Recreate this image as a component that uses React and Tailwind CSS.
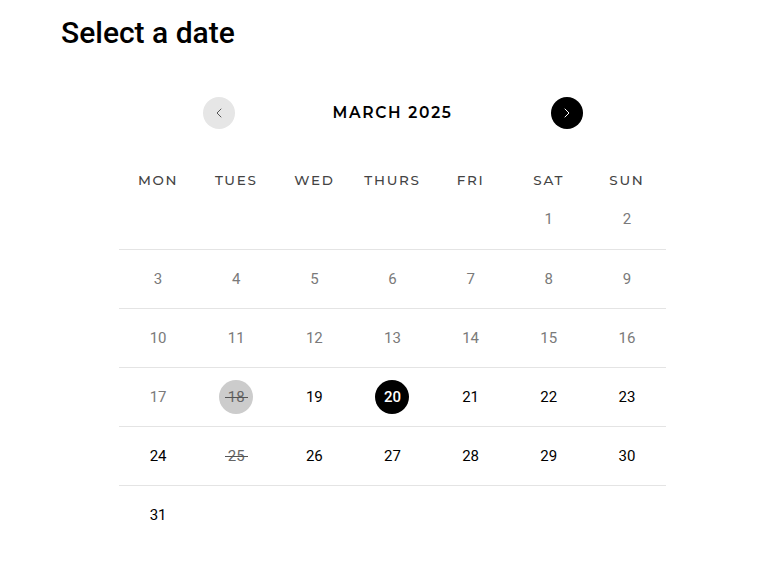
import React from "react";
import { ChevronLeft, ChevronRight } from "lucide-react";

const DAYS = ["MON", "TUES", "WED", "THURS", "FRI", "SAT", "SUN"];

// March 2025 starts on a Saturday
const WEEKS = [
  [null, null, null, null, null, 1, 2],
  [3, 4, 5, 6, 7, 8, 9],
  [10, 11, 12, 13, 14, 15, 16],
  [17, 18, 19, 20, 21, 22, 23],
  [24, 25, 26, 27, 28, 29, 30],
  [31, null, null, null, null, null, null],
];

const TODAY = 18;
const SELECTED = 20;
const BLOCKED = [18, 25];

export default function App() {
  return (
    <div className="min-h-screen bg-white font-['Roboto',sans-serif] text-black">
      {/* Header */}
      <h1 className="pl-[61px] pt-[15px] text-[30px] leading-[36px] font-medium">
        Select a date
      </h1>

      <div className="ml-[119px] w-[547px] mt-[46px]">
        {/* Month nav */}
        <div className="mx-auto w-[380px] flex items-center justify-between">
          <button className="w-8 h-8 rounded-full bg-[#e6e6e6] flex items-center justify-center text-[#555]">
            <ChevronLeft size={16} strokeWidth={1.5} />
          </button>
          <span className="font-['Montserrat','DejaVu_Sans',sans-serif] font-semibold text-[15.5px] tracking-[1.7px]">
            MARCH 2025
          </span>
          <button className="w-8 h-8 rounded-full bg-black flex items-center justify-center text-white">
            <ChevronRight size={16} strokeWidth={1.5} />
          </button>
        </div>

        {/* Weekday labels */}
        <div className="grid grid-cols-7 mt-[41px]">
          {DAYS.map((d) => (
            <div
              key={d}
              className="text-center font-['Montserrat','DejaVu_Sans',sans-serif] font-medium text-[13.5px] tracking-[1.7px] text-[#444] leading-[20px]"
            >
              {d}
            </div>
          ))}
        </div>

        {/* Weeks */}
        <div>
          {WEEKS.map((week, wi) => (
            <div
              key={wi}
              className={`grid grid-cols-7 h-[59px] items-center ${
                wi > 0 ? "border-t border-[#e4e4e4]" : ""
              }`}
            >
              {week.map((day, di) => (
                <div key={di} className="flex justify-center">
                  {day && <Day day={day} />}
                </div>
              ))}
            </div>
          ))}
        </div>
      </div>
    </div>
  );
}

const Day = ({ day }) => {
  const blocked = BLOCKED.includes(day);
  const selected = day === SELECTED;
  const past = day < TODAY;

  let cls = "text-black";
  if (past) cls = "text-[#7a7a7a]";
  if (blocked) cls = "text-[#666]";
  if (day === TODAY) cls += " bg-[#cccccc]";
  if (selected) cls = "bg-black text-white font-medium";

  return (
    <span
      className={`w-[34px] h-[34px] rounded-full flex items-center justify-center text-[15px] ${cls}`}
    >
      <span className="relative">
        {day}
        {blocked && (
          <span className="absolute left-[-3px] right-[-3px] top-1/2 h-px bg-[#555]" />
        )}
      </span>
    </span>
  );
};
